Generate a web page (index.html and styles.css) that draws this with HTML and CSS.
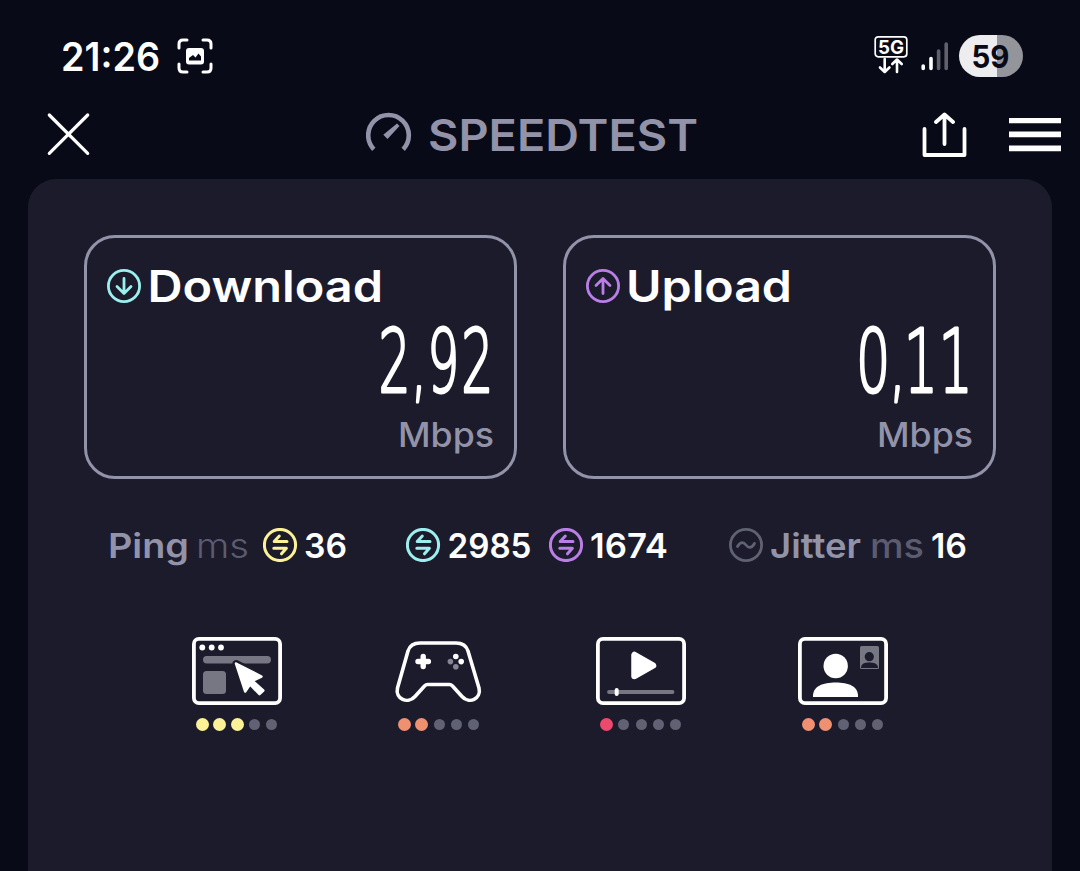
FILE: index.html
```html
<!DOCTYPE html>
<html lang="en">
<head>
<meta charset="utf-8">
<title>Speedtest</title>
<link rel="stylesheet" href="styles.css">
</head>
<body>
<svg class="defs" width="0" height="0">
  <defs>
    <g id="swap" fill="none" stroke="currentColor" stroke-width="3" stroke-linecap="round" stroke-linejoin="round">
      <circle cx="17" cy="17" r="15.6"/>
      <path stroke-width="3" d="M24 13.6H11.2L16.300 8M10.800 20.200H23.400L18.500 25.800"/>
    </g>
  </defs>
</svg>

<div class="status">
  <svg class="word" width="100" height="40"><text class="time" x="-1" y="34.500" textLength="99" lengthAdjust="spacingAndGlyphs">21:26</text></svg>
  <svg class="capture" width="36" height="36" viewBox="0 0 36 36">
    <path d="M2 10V6Q2 2 6 2H10M26 2H30Q34 2 34 6V10M34 26V30Q34 34 30 34H26M10 34H6Q2 34 2 30V26" fill="none" stroke="#fff" stroke-width="3" stroke-linecap="round"/>
    <rect x="9" y="10" width="18" height="16.500" rx="3" fill="#fff"/>
    <path d="M12 22.500V20L16 17L18.500 19.500L21.500 15.500L24 18.500V22.500Z" fill="#080a17"/>
  </svg>
  <svg class="network" width="36" height="40" viewBox="0 0 36 40">
    <rect x="1.200" y="1.800" width="31.600" height="20" rx="3" fill="none" stroke="#fff" stroke-width="1.700"/>
    <text class="fiveg" x="4" y="18.700" textLength="26" lengthAdjust="spacingAndGlyphs">5G</text>
    <path d="M10.700 24V36.500M6 32.500L10.700 37L15.400 32.500M23 37V25M18.300 29L23 24.500L27.700 29" fill="none" stroke="#fff" stroke-width="2.600" stroke-linecap="round" stroke-linejoin="round"/>
  </svg>
  <svg class="signal" width="28" height="30" viewBox="0 0 28 30" stroke-width="3.600" stroke-linecap="round">
    <path d="M2.200 25V27.500M10 17.500V27.500" stroke="#fff"/>
    <path d="M17.600 10V27.500M25.200 3V27.500" stroke="#5f616b"/>
  </svg>
  <div class="battery"><svg class="word" width="64" height="42"><text class="charge" x="12.500" y="32.500" textLength="38" lengthAdjust="spacingAndGlyphs">59</text></svg></div>
</div>

<header class="header">
  <svg class="word" width="42" height="42" viewBox="0 0 42 42"><path d="M1.300 1L39.700 39.400M39.700 1L1.300 39.400" stroke="#fff" stroke-width="3.200" stroke-linecap="round"/></svg>
  <svg class="gauge" width="46" height="46" viewBox="0 0 46 46">
    <path d="M7.800 37.300A20.300 20.300 0 1 1 37.200 37.300" fill="none" stroke="#9293a8" stroke-width="4.600"/>
    <path d="M31 11.500L33.500 14L21.500 27L17.300 22.800Z" fill="#9293a8"/>
  </svg>
  <svg class="word brand-word" width="270" height="46"><text class="brand" x="-2" y="38.500" textLength="270" lengthAdjust="spacingAndGlyphs">SPEEDTEST</text></svg>
  <svg class="share" width="46" height="46" viewBox="0 0 46 46"><path d="M2.500 17V43H42.500V17M22.500 32V3M14 10L22.500 2.500L31 10" fill="none" stroke="#fff" stroke-width="3.800" stroke-linecap="round" stroke-linejoin="round"/></svg>
  <svg class="menu" width="52" height="34" viewBox="0 0 52 34"><path d="M0 2.300H52M0 16.300H52M0 30.300H52" stroke="#fff" stroke-width="5.800"/></svg>
</header>

<main class="panel">
  <section class="cards">
    <article class="card">
      <div class="card-title">
        <svg width="34" height="34" viewBox="0 0 34 34" fill="none" stroke="#9cefee" stroke-width="2.800" stroke-linecap="round" stroke-linejoin="round"><circle cx="17" cy="17" r="15.600"/><path d="M17 9.500V24M10 17.500L17 24.500L24 17.500"/></svg>
        <svg class="word" width="236" height="46"><text class="title" x="-2.500" y="39" textLength="235.500" lengthAdjust="spacingAndGlyphs">Download</text></svg>
      </div>
      <svg class="word value" width="112" height="76"><text class="digits" transform="scale(.58 1)" x="-6 50 78 136.500" y="66.500">2,92</text></svg>
      <svg class="word unit" width="94" height="36"><text class="mbps" x="-2" y="26" textLength="96" lengthAdjust="spacingAndGlyphs">Mbps</text></svg>
    </article>
    <article class="card">
      <div class="card-title">
        <svg width="34" height="34" viewBox="0 0 34 34" fill="none" stroke="#b97fe6" stroke-width="2.800" stroke-linecap="round" stroke-linejoin="round"><circle cx="17" cy="17" r="15.600"/><path d="M17 24.500V10M10 16.500L17 9.500L24 16.500"/></svg>
        <svg class="word" width="166" height="46"><text class="title" x="-3" y="39" textLength="166" lengthAdjust="spacingAndGlyphs">Upload</text></svg>
      </div>
      <svg class="word value" width="112" height="76"><text class="digits" transform="scale(.62 1)" x="-8 45 69 125" y="66.500">0,11</text></svg>
      <svg class="word unit" width="94" height="36"><text class="mbps" x="-2" y="26" textLength="96" lengthAdjust="spacingAndGlyphs">Mbps</text></svg>
    </article>
  </section>

  <section class="stats">
    <svg class="word" width="87" height="40"><text class="name" x="-2" y="32.500" textLength="81" lengthAdjust="spacingAndGlyphs">Ping</text></svg>
    <svg class="word" width="66" height="40"><text class="ms thin" x="-1" y="32.500" textLength="53" lengthAdjust="spacingAndGlyphs">ms</text></svg>
    <svg class="yellow" width="42" height="34"><use href="#swap"/></svg>
    <svg class="word" width="101" height="40"><text class="num" x="-1" y="32.500" textLength="43" lengthAdjust="spacingAndGlyphs">36</text></svg>
    <svg class="teal" width="42" height="34"><use href="#swap"/></svg>
    <svg class="word" width="101" height="40"><text class="num" x="-.5" y="32.500" textLength="84" lengthAdjust="spacingAndGlyphs">2985</text></svg>
    <svg class="purple" width="42" height="34"><use href="#swap"/></svg>
    <svg class="word" width="138" height="40"><text class="num" x="-1" y="32.500" textLength="78" lengthAdjust="spacingAndGlyphs">1674</text></svg>
    <svg width="42" height="34" fill="none" stroke="#606173" stroke-width="2.800" stroke-linecap="round"><circle cx="17" cy="17" r="15.600"/><path d="M8.500 18.500C12 12.500 15 14.500 17 17S22 21.500 25.500 15.500"/></svg>
    <svg class="word" width="101" height="40"><text class="name" x="-1" y="32.500" textLength="91" lengthAdjust="spacingAndGlyphs">Jitter</text></svg>
    <svg class="word" width="60" height="40"><text class="ms" x="-2" y="32.500" textLength="54" lengthAdjust="spacingAndGlyphs">ms</text></svg>
    <svg class="word" width="36" height="40"><text class="num" x="-1" y="32.500" textLength="36" lengthAdjust="spacingAndGlyphs">16</text></svg>
  </section>

  <section class="uses">
    <div class="use">
      <svg width="90" height="68" viewBox="0 0 90 68">
        <rect x="1.900" y="1.900" width="86.200" height="64.200" rx="5" fill="none" stroke="#fff" stroke-width="3.800"/>
        <g fill="#fff"><circle cx="10.300" cy="10.500" r="2.900"/><circle cx="19.700" cy="10.500" r="2.900"/><circle cx="29" cy="10.500" r="2.900"/></g>
        <rect x="11" y="19" width="68" height="7.500" rx="3.700" fill="#777783"/>
        <rect x="11" y="34" width="23" height="23" rx="3.500" fill="#777783"/>
        <path d="M44 26.500L69 39L61.800 44.500L71 53.500L68 57L58.800 47.500L53.700 54.500Z" fill="#1b1c2c" stroke="#1b1c2c" stroke-width="7" stroke-linejoin="round"/>
        <path d="M44 26.500L69.500 39.500L60.500 43.800L71.300 53.500L67.500 57.200L58 47.500L53.200 54.500Z" fill="#fff" stroke="#fff" stroke-width="2.500" stroke-linejoin="round"/>
      </svg>
      <div class="dots yellow"><i class="on"></i><i class="on"></i><i class="on"></i><i></i><i></i></div>
    </div>
    <div class="use">
      <svg width="90" height="68" viewBox="0 0 90 68">
        <path d="M26 6H62Q71.500 6 74 14L85 51C87.500 62 75 67.500 68 59.500L58.500 49Q57 47.500 55.500 47.500H33.500Q32 47.500 30.500 49L21 59.500C14 67.500 1 62 3.500 51L14 14Q16.500 6 26 6Z" fill="none" stroke="#fff" stroke-width="3.600" stroke-linejoin="round"/>
        <path d="M29.200 19.500V29.500M24 24.500H34.400" stroke="#fff" stroke-width="5.400" stroke-linecap="round"/>
        <g fill="#fff"><circle cx="61.800" cy="19.500" r="2.800"/><circle cx="67.200" cy="24.600" r="2.800"/></g><g fill="#858593"><circle cx="56.400" cy="24.600" r="2.800"/><circle cx="61.800" cy="29.700" r="2.800"/></g>
      </svg>
      <div class="dots orange"><i class="on"></i><i class="on"></i><i></i><i></i><i></i></div>
    </div>
    <div class="use">
      <svg width="90" height="68" viewBox="0 0 90 68">
        <rect x="1.900" y="1.900" width="86.200" height="64.200" rx="5" fill="none" stroke="#fff" stroke-width="3.800"/>
        <path d="M38.500 18V39L57 28.500Z" fill="#fff" stroke="#fff" stroke-width="6.500" stroke-linejoin="round"/>
        <path d="M13 55H76.500" stroke="#777783" stroke-width="3.800" stroke-linecap="round"/>
        <path d="M20.700 53V57" stroke="#fff" stroke-width="4" stroke-linecap="round"/>
      </svg>
      <div class="dots red"><i class="on"></i><i></i><i></i><i></i><i></i></div>
    </div>
    <div class="use">
      <svg width="90" height="68" viewBox="0 0 90 68">
        <rect x="1.900" y="1.900" width="86.200" height="64.200" rx="5" fill="none" stroke="#fff" stroke-width="3.800"/>
        <circle cx="37.700" cy="29" r="12.200" fill="#fff"/>
        <path d="M15 60C14.500 49 25 45.500 37.700 45.500S60.500 49 60 60Z" fill="#fff"/>
        <rect x="62" y="9" width="19" height="23" rx="1.500" fill="#777783"/>
        <circle cx="71.300" cy="19.700" r="4.600" fill="#1b1c2c"/>
        <path d="M63 31C63 26.500 67 25.500 71.300 25.500S80 26.500 80 31Z" fill="#1b1c2c"/>
      </svg>
      <div class="dots orange"><i class="on"></i><i class="on"></i><i></i><i></i><i></i></div>
    </div>
  </section>
</main>
</body>
</html>
```
FILE: styles.css
```css
* { box-sizing: border-box; }
body {
  margin: 0;
  height: 871px;
  overflow: hidden;
  display: flex;
  flex-direction: column;
  background: #080a17;
  color: #fff;
  font-family: Inter, "Liberation Sans", sans-serif;
}
svg { display: block; flex: none; }
.defs { position: absolute; }
.word { overflow: visible; }
text { fill: #fff; font-weight: 600; }

.status { height: 96px; flex: none; display: flex; align-items: center; padding: 16px 57px 0 62px; }
.time { font-size: 39px; }
.capture { margin-left: 15px; }
.network { margin-left: auto; margin-top: -3px; }
.fiveg { font-size: 19px; font-weight: 700; }
.signal { margin-left: 11px; }
.battery {
  width: 64px;
  height: 42px;
  margin-left: 10px;
  border-radius: 21px;
  background: linear-gradient(90deg, #ededf0 59%, #94959b 59%);
}
.charge { font-size: 31px; font-weight: 700; fill: #080a17; }

.header { height: 83px; flex: none; display: flex; align-items: center; padding: 0 19px 6px 48px; }
.gauge { margin-left: 276px; }
.brand-word { margin-left: 18px; }
.brand { font-size: 44px; fill: #9293a8; }
.share { margin-left: auto; }
.menu { margin-left: 41px; }

.panel {
  flex: 1;
  margin: 0 28px;
  padding: 56px 56px 0;
  border-radius: 28px 28px 0 0;
  background: #1b1b2c;
}
.cards { display: grid; grid-template-columns: 433px 433px; gap: 46px; }
.card {
  height: 244px;
  border: 3px solid #9293a8;
  border-radius: 31px;
  padding: 25px 20px 0;
  display: flex;
  flex-direction: column;
}
.card-title { display: flex; align-items: center; gap: 9px; height: 46px; }
.title { font-size: 44px; }
.value { align-self: flex-end; margin: 16px 0 0; }
.digits { font-family: "DejaVu Sans", "DejaVu Sans Light", sans-serif; font-weight: 200; font-size: 87px; stroke: #fff; stroke-width: 3px; stroke-linejoin: round; }
.unit { align-self: flex-end; margin-top: 20px; }
.mbps { font-size: 34px; font-weight: 500; fill: #9293a8; }

.stats { display: flex; align-items: center; height: 40px; margin: 46px 0 0 26px; }
.name { font-size: 34px; fill: #9293a8; }
.num { font-size: 34px; }
.ms { font-size: 34px; font-weight: 500; fill: #5b5c6f; }
.thin { font-weight: 300; }
.yellow { color: #fbf297; }
.teal { color: #9cefee; }
.purple { color: #b97fe6; }
.orange { color: #ef9070; }
.red { color: #ea4a6c; }

.uses { display: flex; gap: 112px; margin: 72px 0 0 108px; }
.use { width: 90px; }
.dots { display: flex; align-items: center; justify-content: space-between; height: 14px; margin: 12px 4px 0; }
.dots i { width: 11px; height: 11px; margin: 0 1px; border-radius: 50%; background: #606173; }
.dots .on { width: 13px; height: 13px; margin: 0; background: currentColor; }
```
